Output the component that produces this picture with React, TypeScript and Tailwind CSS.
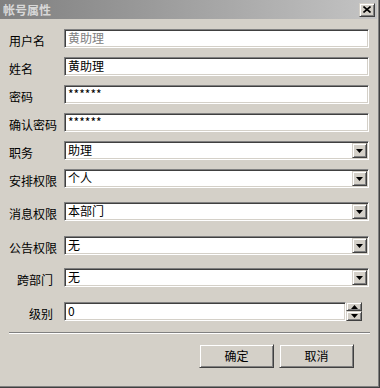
import React from 'react';

type Row = {
  label: string;
  kind: 'text' | 'select' | 'spin';
  value: string;
  gap: string;
  right?: boolean;
  disabled?: boolean;
};

const rows: Row[] = [
  { label: '用户名', kind: 'text', value: '黄助理', gap: 'mt-[10px]', disabled: true },
  { label: '姓名', kind: 'text', value: '黄助理', gap: 'mt-[9px]' },
  { label: '密码', kind: 'text', value: '******', gap: 'mt-[9px]' },
  { label: '确认密码', kind: 'text', value: '******', gap: 'mt-[9px]' },
  { label: '职务', kind: 'select', value: '助理', gap: 'mt-[9px]' },
  { label: '安排权限', kind: 'select', value: '个人', gap: 'mt-[9px]' },
  { label: '消息权限', kind: 'select', value: '本部门', gap: 'mt-[14px]' },
  { label: '公告权限', kind: 'select', value: '无', gap: 'mt-[15px]' },
  { label: '跨部门', kind: 'select', value: '无', gap: 'mt-[13px]', right: true },
  { label: '级别', kind: 'spin', value: '0', gap: 'mt-[15px]', right: true },
];

const sunken =
  'border border-t-[#808080] border-l-[#808080] border-b-white border-r-white shadow-[inset_1px_1px_#404040,inset_-1px_-1px_#d4d0c8] bg-white';
const raised =
  'border border-t-[#d4d0c8] border-l-[#d4d0c8] border-b-[#404040] border-r-[#404040] shadow-[inset_1px_1px_white,inset_-1px_-1px_#808080] bg-[#d4d0c8]';

function Arrow({ up }: { up?: boolean }) {
  return (
    <svg width="7" height="4" viewBox="0 0 7 4">
      <polygon points={up ? '3.5,0 7,4 0,4' : '0,0 7,0 3.5,4'} fill="#000" />
    </svg>
  );
}

function Field({ row }: { row: Row }) {
  const text = (
    <span
      className={`pl-[3px] pt-[1px] text-[12px] leading-[14px] ${row.disabled ? 'text-[#808080]' : 'text-black'}`}
    >
      {row.value}
    </span>
  );

  if (row.kind === 'spin') {
    return (
      <div className="flex h-[19px]">
        <div className={`${sunken} w-[282px] h-full flex items-start`}>{text}</div>
        <div className="flex flex-col w-[16px] h-full">
          <div className={`${raised} h-[9px] flex items-center justify-center`}>
            <Arrow up />
          </div>
          <div className={`${raised} h-[10px] flex items-center justify-center`}>
            <Arrow />
          </div>
        </div>
      </div>
    );
  }

  return (
    <div className={`${sunken} w-[305px] h-[19px] flex items-start justify-between`}>
      {text}
      {row.kind === 'select' && (
        <div className={`${raised} w-[15px] h-[15px] mt-[1px] mr-[1px] flex items-center justify-center`}>
          <Arrow />
        </div>
      )}
    </div>
  );
}

export default function App() {
  return (
    <div
      className="w-[380px] h-[388px] bg-[#d4d0c8] flex flex-col overflow-hidden shadow-[inset_-1px_-1px_#404040,inset_-2px_-2px_#808080]"
      style={{ fontFamily: '"Noto Sans CJK SC", "Liberation Sans", sans-serif' }}
    >
      {/* Title bar */}
      <div className="h-[19px] mr-[3px] flex items-center justify-between pl-[3px] pr-[2px] bg-gradient-to-r from-[#808080] to-[#c4c4c4]">
        <span className="text-[12px] font-bold text-[#d8d8d8] leading-none">帐号属性</span>
        <div className={`${raised} w-[16px] h-[14px] flex items-center justify-center`}>
          <svg width="8" height="7" viewBox="0 0 8 7">
            <path d="M0.5 0.5 L7.5 6.5 M7.5 0.5 L0.5 6.5" stroke="#000" strokeWidth="1.6" />
          </svg>
        </div>
      </div>

      {/* Form rows */}
      {rows.map((row) => (
        <div key={row.label} className={`${row.gap} flex items-start`}>
          <div
            className={`w-[64px] shrink-0 pt-[5px] text-[12px] leading-[14px] text-black ${row.right ? 'text-right pr-[11px]' : 'pl-[9px]'}`}
          >
            {row.label}
          </div>
          <Field row={row} />
        </div>
      ))}

      {/* Separator */}
      <div className="mt-[11px] ml-[9px] w-[361px] h-[2px] border-t border-t-[#808080] border-b border-b-white" />

      {/* Buttons */}
      <div className="mt-[10px] flex gap-[5px] pl-[199px]">
        <button className={`${raised} w-[75px] h-[24px] text-[12px] text-black`}>确定</button>
        <button className={`${raised} w-[75px] h-[24px] text-[12px] text-black`}>取消</button>
      </div>
    </div>
  );
}
